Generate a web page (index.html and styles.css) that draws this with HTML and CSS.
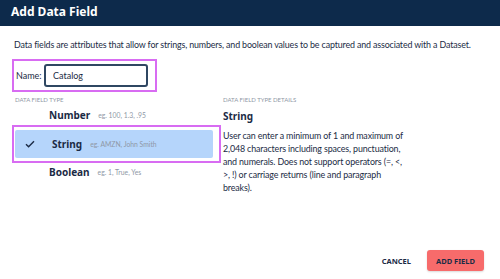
FILE: index.html
```html
<!DOCTYPE html>
<html lang="en">
<head>
  <meta charset="UTF-8" />
  <title>Add Data Field</title>
  <link rel="stylesheet" href="styles.css">
</head>
<body>
  <div class="modal">
    <div class="modal-header">
      <h2>Add Data Field</h2>
    </div>
    <div class="modal-body">
      <p class="intro">Data fields are attributes that allow for strings, numbers, and boolean values to be captured and associated with a Dataset.</p>
      <div class="name-row">
        <label for="fieldName">Name:</label>
        <input type="text" id="fieldName" value="Catalog">
      </div>
      <div class="columns">
        <div class="type-col">
          <div class="section-label">Data Field Type</div>
          <div class="type-option">
            <span class="check"></span>
            <span class="type-name">Number</span>
            <span class="type-example">eg. 100, 1.3, .95</span>
          </div>
          <div class="selected-frame">
            <div class="type-option selected">
              <span class="check">
                <svg width="10" height="8" viewBox="0 0 10 8"><path d="M1 4.2 L3.6 6.8 L9 1.2" fill="none" stroke="#1b2b45" stroke-width="1.4"/></svg>
              </span>
              <span class="type-name">String</span>
              <span class="type-example">eg. AMZN, John Smith</span>
            </div>
          </div>
          <div class="type-option">
            <span class="check"></span>
            <span class="type-name">Boolean</span>
            <span class="type-example">eg. 1, True, Yes</span>
          </div>
        </div>
        <div class="details-col">
          <div class="section-label">Data Field Type Details</div>
          <h3>String</h3>
          <p class="details">User can enter a minimum of 1 and maximum of 2,048 characters including spaces, punctuation, and numerals. Does not support operators (=, &lt;, &gt;, !) or carriage returns (line and paragraph breaks).</p>
        </div>
      </div>
    </div>
    <div class="modal-footer">
      <button class="btn-cancel">Cancel</button>
      <button class="btn-add">Add Field</button>
    </div>
  </div>
</body>
</html>
```

FILE: styles.css
```css
body {
  margin: 0;
  font-family: Lato, "Open Sans", sans-serif;
  color: #1b2b45;
  background: white;
}
.modal {
  width: 500px;
  height: 279px;
  position: relative;
}
.modal-header {
  background: #0d2a4b;
  height: 26px;
  padding-left: 11px;
  display: flex;
  align-items: center;
}
.modal-header h2 {
  margin: 0;
  color: white;
  font-family: "Noto Sans", sans-serif;
  font-size: 12px;
  font-weight: 700;
  position: relative;
  top: -2px;
}
.modal-body {
  padding: 0 0 0 12px;
}
.intro {
  margin: 12px 0 0 2px;
  font-size: 8.9px;
  letter-spacing: -0.14px;
  line-height: 13px;
  white-space: nowrap;
}
.name-row {
  margin-top: 8px;
  width: 139px;
  height: 29px;
  border: 2px solid #d86cf2;
  display: flex;
  align-items: center;
  padding-left: 2px;
}
.name-row label {
  font-size: 9px;
  width: 28px;
}
.name-row input {
  width: 93px;
  height: 19px;
  border: 2px solid #2f4762;
  border-radius: 3px;
  padding: 0 0 0 7px;
  font-family: Lato, sans-serif;
  font-size: 9px;
  color: #1b2b45;
  outline: none;
}
.columns {
  display: flex;
}
.type-col {
  width: 206px;
}
.details-col {
  margin-left: 5px;
  width: 190px;
}
.section-label {
  font-size: 6px;
  text-transform: uppercase;
  color: #8f98a6;
  margin-top: 3px;
  margin-left: 3px;
  height: 10px;
  line-height: 10px;
}
.type-option {
  display: flex;
  align-items: center;
  height: 20px;
}
.type-col > .type-option:first-of-type {
  margin-top: 6px;
}
.check {
  width: 37px;
  padding-left: 14px;
  box-sizing: border-box;
  display: flex;
  align-items: center;
}
.type-name {
  font-family: "Noto Sans", sans-serif;
  font-weight: 700;
  font-size: 10px;
  margin-right: 8px;
}
.type-example {
  font-size: 6.8px;
  color: #8f98a6;
}
.selected-frame {
  border: 2px solid #d86cf2;
  padding: 3px 6px 3px 1px;
  width: 198px;
}
.type-option.selected {
  background: #b5d5fb;
  border-radius: 2px;
  height: 28px;
}
.type-option.selected .check {
  padding-left: 10px;
}
.selected-frame + .type-option {
  height: 17px;
  margin-top: 0;
}
.details-col .section-label {
  margin-left: 0;
}
.details-col h3 {
  margin: 4px 0 0;
  font-family: "Noto Sans", sans-serif;
  font-size: 10px;
  font-weight: 700;
  line-height: 15px;
}
.details {
  margin: 5px 0 0;
  font-size: 8.9px;
  letter-spacing: -0.14px;
  line-height: 13px;
  width: 184px;
}
.modal-footer {
  position: absolute;
  right: 16px;
  bottom: 8px;
  display: flex;
  align-items: center;
}
.modal-footer button {
  font-family: "Noto Sans", sans-serif;
  font-weight: 700;
  font-size: 7.5px;
  text-transform: uppercase;
  color: #1b2b45;
  border: none;
  cursor: pointer;
}
.btn-cancel {
  background: none;
  margin-right: 10px;
}
.btn-add {
  background: #f76b6b;
  border-radius: 3px;
  width: 57px;
  height: 21px;
  box-shadow: 0 1px 2px rgba(0, 0, 0, 0.15);
}
```
